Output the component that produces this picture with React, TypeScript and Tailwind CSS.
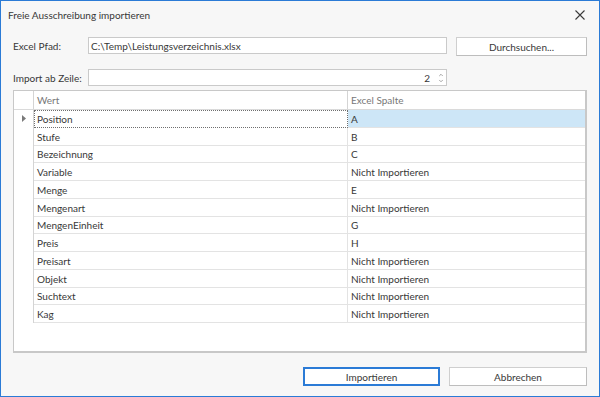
import { ChevronDown, ChevronUp } from 'lucide-react';

type Mapping = {
  wert: string;
  spalte: string;
};

const MAPPINGS: Mapping[] = [
  { wert: 'Position', spalte: 'A' },
  { wert: 'Stufe', spalte: 'B' },
  { wert: 'Bezeichnung', spalte: 'C' },
  { wert: 'Variable', spalte: 'Nicht Importieren' },
  { wert: 'Menge', spalte: 'E' },
  { wert: 'Mengenart', spalte: 'Nicht Importieren' },
  { wert: 'MengenEinheit', spalte: 'G' },
  { wert: 'Preis', spalte: 'H' },
  { wert: 'Preisart', spalte: 'Nicht Importieren' },
  { wert: 'Objekt', spalte: 'Nicht Importieren' },
  { wert: 'Suchtext', spalte: 'Nicht Importieren' },
  { wert: 'Kag', spalte: 'Nicht Importieren' },
];

//-------------------------------- GridRow --------------------------------
interface GridRowProps {
  row: Mapping;
  active: boolean;
}

const GridRow = ({ row, active }: GridRowProps) => (
  <div className="flex h-[17.75px]">
    <div className="flex w-[20px] items-center justify-center border-r border-[#d4d4d4] bg-white">
      {active && (
        <svg width="4" height="7" viewBox="0 0 4 7">
          <path d="M0 0 L4 3.5 L0 7 Z" fill="#7a7a7a" />
        </svg>
      )}
    </div>
    <div
      className={
        active
          ? 'flex w-[314px] items-center border border-dotted border-[#6f6f6f] bg-white pl-[2px] pt-[1px]'
          : 'flex w-[314px] items-center border-b border-r border-[#e3e3e3] bg-white pl-[3px] pt-[1px]'
      }
    >
      {row.wert}
    </div>
    <div
      className={
        active
          ? 'flex flex-1 items-center border-b border-[#e3e3e3] bg-[#cde6f7] pl-[3px] pt-[1px]'
          : 'flex flex-1 items-center border-b border-[#e3e3e3] bg-white pl-[3px] pt-[1px]'
      }
    >
      {row.spalte}
    </div>
  </div>
);

//-------------------------------- App --------------------------------
export default function App() {
  return (
    <div
      className="flex h-[397px] w-[600px] flex-col border border-[#2b7bd6] bg-[#f7f7f7] text-[10px] leading-none whitespace-nowrap text-[#383838]"
      style={{ fontFamily: 'Lato, "Open Sans", sans-serif' }}
    >
      {/* Titelleiste */}
      <div className="flex h-[28px] items-center justify-between pl-[7px] pr-[14px]">
        <span>Freie Ausschreibung importieren</span>
        <svg width="10" height="10" viewBox="0 0 10 10">
          <path d="M0.5 0.5 L9.5 9.5 M9.5 0.5 L0.5 9.5" stroke="#3a3a3a" strokeWidth="1.1" />
        </svg>
      </div>

      <div className="flex flex-1 flex-col px-[12px]">
        {/* Excel Pfad */}
        <div className="mt-[8px] flex h-[19px] items-start">
          <label className="flex h-[17px] w-[75px] items-center">Excel Pfad:</label>
          <div className="flex h-[17px] w-[359px] items-center border border-[#cacaca] bg-white px-[2px]">
            C:\Temp\Leistungsverzeichnis.xlsx
          </div>
          <button
            type="button"
            className="ml-[9px] h-[19px] w-[131px] border border-[#cfcfcf] border-b-[#bdbdbd] border-r-[#bdbdbd] bg-white"
          >
            Durchsuchen...
          </button>
        </div>

        {/* Import ab Zeile */}
        <div className="mt-[13px] flex h-[17px] items-center">
          <label className="w-[75px]">Import ab Zeile:</label>
          <div className="flex h-[17px] w-[359px] items-center justify-end border border-[#cacaca] bg-white pr-[2px]">
            <span className="mr-[8px]">2</span>
            <div className="flex flex-col text-[#8a8a8a]">
              <ChevronUp size={6} strokeWidth={3} />
              <ChevronDown size={6} strokeWidth={3} />
            </div>
          </div>
        </div>

        {/* Tabelle */}
        <div className="mt-[4px] flex h-[263px] w-[574px] flex-col border border-b-2 border-r-2 border-[#c8c8c8] bg-white">
          <div className="flex h-[19px] border-b border-[#dadada] text-[#777777]">
            <div className="w-[20px] border-r border-[#d4d4d4]" />
            <div className="flex w-[314px] items-center border-r border-[#d4d4d4] pl-[3px]">Wert</div>
            <div className="flex flex-1 items-center pl-[3px]">Excel Spalte</div>
          </div>
          {MAPPINGS.map((row, index) => (
            <GridRow key={row.wert} row={row} active={index === 0} />
          ))}
          <div className="flex flex-1">
            <div className="w-[20px]" />
          </div>
        </div>

        {/* Buttons */}
        <div className="mt-[14px] flex justify-end gap-[9px]">
          <button type="button" className="h-[19px] w-[137px] border-2 border-[#2b7bd6] bg-white">
            Importieren
          </button>
          <button
            type="button"
            className="h-[19px] w-[138px] border border-[#cfcfcf] border-b-[#bdbdbd] border-r-[#bdbdbd] bg-white"
          >
            Abbrechen
          </button>
        </div>
      </div>
    </div>
  );
}
